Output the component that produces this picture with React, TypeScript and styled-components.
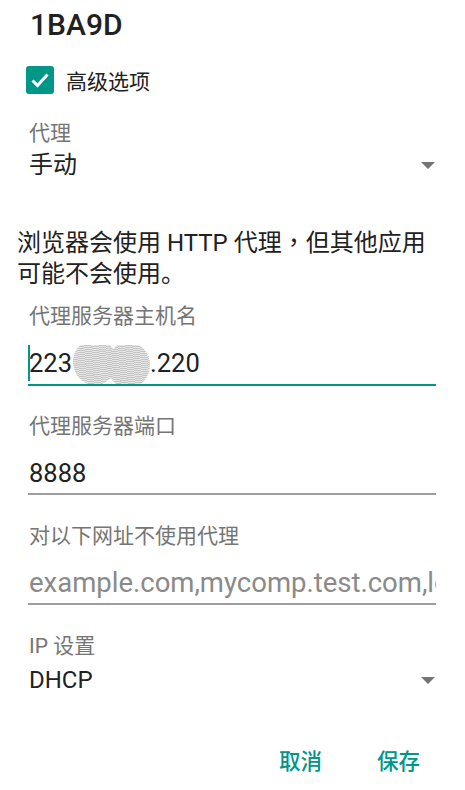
import React from "react"
import styled, { createGlobalStyle } from "styled-components"

const GlobalStyle = createGlobalStyle`
  html, body {
    margin: 0;
    padding: 0;
    background: #ffffff;
  }
  body {
    font-family: Roboto, "Noto Sans CJK SC", sans-serif;
    color: #212121;
  }
`

const teal = "#009688"

const Dialog = styled.div`
  width: 465px;
  height: 790px;
  box-sizing: border-box;
  padding: 0 29px 0 28px;
  display: flex;
  flex-direction: column;
  overflow: hidden;
`

const Title = styled.h1`
  margin: 7px 0 0 2px;
  font-size: 30px;
  line-height: 36px;
  font-weight: 500;
  color: #212121;
`

const CheckRow = styled.label`
  display: flex;
  align-items: center;
  gap: 12px;
  height: 40px;
  margin-top: 17px;
  margin-left: -2px;
  font-size: 21px;
  color: #212121;
`

const CheckBox = styled.span`
  display: flex;
  align-items: center;
  justify-content: center;
  width: 28px;
  height: 28px;
  border-radius: 3px;
  background: ${teal};
`

const Label = styled.div<{ $top: number }>`
  margin: ${(p) => p.$top}px 0 0 1px;
  font-size: 21px;
  line-height: 26px;
  color: #757575;
`

const Spinner = styled.div<{ $top: number }>`
  display: flex;
  align-items: center;
  justify-content: space-between;
  margin: ${(p) => p.$top}px 1px 0 1px;
  font-size: 24px;
  line-height: 32px;
  color: #212121;
`

const Arrow = styled.span`
  width: 0;
  height: 0;
  border-left: 7.5px solid transparent;
  border-right: 7.5px solid transparent;
  border-top: 7px solid #757575;
`

const Note = styled.p`
  margin: 47px 0 0 -11px;
  font-size: 24px;
  line-height: 30.5px;
  color: #212121;
`

const CenteredComma = styled.span`
  font-family: "Noto Sans CJK TC", sans-serif;
  line-height: 0;
`

const Field = styled.div<{ $focused?: boolean; $placeholder?: boolean }>`
  display: flex;
  align-items: center;
  margin-top: 16px;
  padding: 0 0 ${(p) => (p.$focused ? 3 : 2)}px 1px;
  height: 36px;
  box-sizing: content-box;
  border-bottom: 2px solid ${(p) => (p.$focused ? teal : "#9e9e9e")};
  font-size: ${(p) => (p.$placeholder ? 27.5 : 25.5)}px;
  line-height: 36px;
  white-space: nowrap;
  overflow: hidden;
  color: ${(p) => (p.$placeholder ? "#8a8a8a" : "#212121")};
`

const Cursor = styled.span`
  display: inline-block;
  flex: none;
  width: 2px;
  height: 38px;
  margin: -2px -1px 0 -1px;
  background: ${teal};
`

const Redacted = styled.span`
  position: relative;
  display: inline-block;
  flex: none;
  width: 78px;
  height: 36px;
`

const Blot = styled.span<{ $left: number; $top: number; $w: number; $h: number }>`
  position: absolute;
  left: ${(p) => p.$left}px;
  top: ${(p) => p.$top}px;
  width: ${(p) => p.$w}px;
  height: ${(p) => p.$h}px;
  border-radius: 50%;
  background: repeating-linear-gradient(
    172deg,
    #c2c2c2 0px,
    #c2c2c2 1px,
    #e4e4e4 1px,
    #e4e4e4 2px
  );
  opacity: 0.95;
`

const Actions = styled.div`
  display: flex;
  justify-content: flex-end;
  gap: 55px;
  margin-top: 52px;
  padding-right: 16px;
`

const TextButton = styled.button`
  border: none;
  background: none;
  padding: 0;
  font-family: Roboto, "Noto Sans CJK SC", sans-serif;
  font-size: 21.5px;
  line-height: 28px;
  font-weight: 500;
  color: ${teal};
`

export default function App() {
  return (
    <>
      <GlobalStyle />
      <Dialog>
        <Title>1BA9D</Title>
        <CheckRow>
          <CheckBox>
            <svg width="28" height="28" viewBox="0 0 28 28">
              <path d="M6.5 14.5 L11.5 19.5 L21.5 8.5" fill="none" stroke="#fff" strokeWidth="3" />
            </svg>
          </CheckBox>
          高级选项
        </CheckRow>

        <Label $top={20}>代理</Label>
        <Spinner $top={3}>
          手动
          <Arrow />
        </Spinner>

        <Note>
          浏览器会使用 HTTP 代理<CenteredComma>，</CenteredComma>但其他应用
          <br />
          可能不会使用。
        </Note>

        <Label $top={14}>代理服务器主机名</Label>
        <Field $focused>
          <Cursor />
          223
          <Redacted>
            <Blot $left={1} $top={-6} $w={44} $h={46} />
            <Blot $left={35} $top={-3} $w={43} $h={46} />
          </Redacted>
          .220
        </Field>

        <Label $top={27}>代理服务器端口</Label>
        <Field>8888</Field>

        <Label $top={28}>对以下网址不使用代理</Label>
        <Field $placeholder>example.com,mycomp.test.com,localhost</Field>

        <Label $top={28}>IP 设置</Label>
        <Spinner $top={5}>
          DHCP
          <Arrow />
        </Spinner>

        <Actions>
          <TextButton>取消</TextButton>
          <TextButton>保存</TextButton>
        </Actions>
      </Dialog>
    </>
  )
}
